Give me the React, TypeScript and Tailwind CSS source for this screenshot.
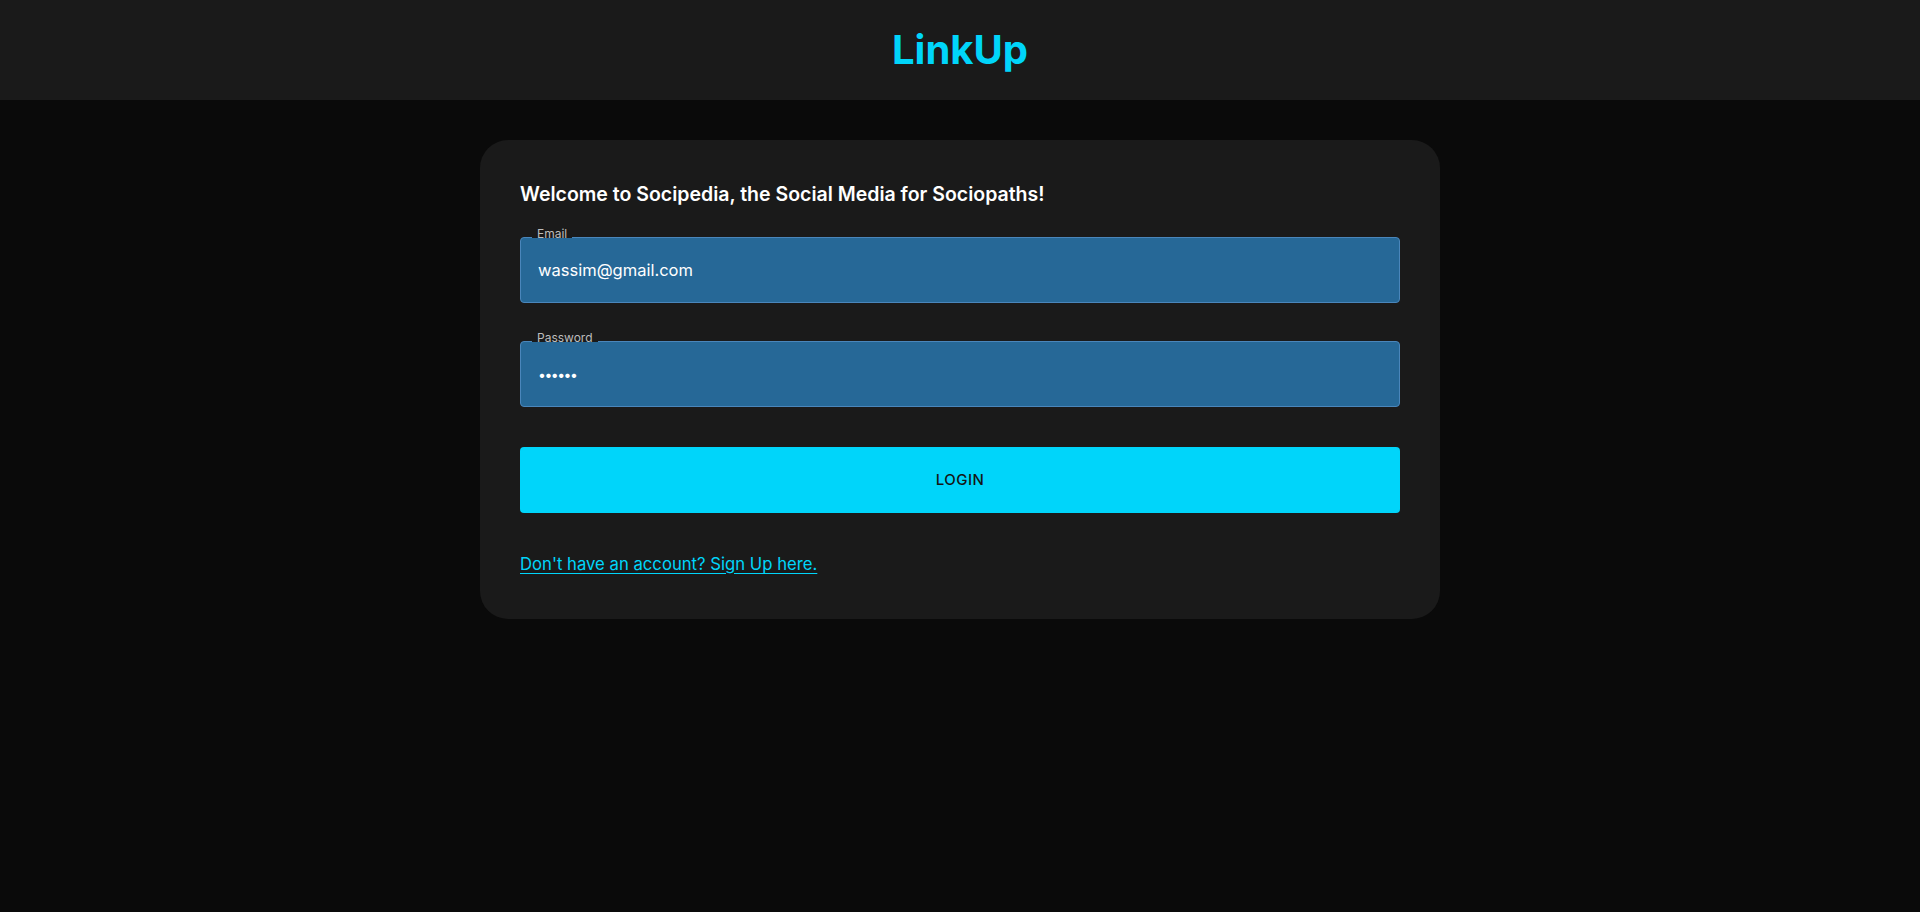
import React from "react";

function Field({ label, value, type }: { label: string; value: string; type: string }) {
  const isPw = type === "password";
  return (
    <div className="relative">
      <div className="h-[66px] rounded-[4px] border border-[#4a86bb] bg-[#266897] flex items-center pl-[17px] pr-4">
        <input
          type={type}
          defaultValue={value}
          readOnly
          className={
            isPw
              ? "w-full bg-transparent text-white text-[14px] tracking-[-1.5px] outline-none font-['Inter',sans-serif]"
              : "w-full bg-transparent text-white text-[16.5px] outline-none font-['Inter',sans-serif]"
          }
        />
      </div>
      <span className="absolute left-[12px] top-[-10px] px-[5px] h-[14px] leading-[14px] bg-[linear-gradient(to_bottom,#1a1a1a_0px,#1a1a1a_11px,transparent_11px)] text-[12px] text-[#bdbdbd] font-['Inter',sans-serif]">
        {label}
      </span>
    </div>
  );
}

export default function App() {
  return (
    <div className="min-h-screen w-full bg-[#0a0a0a] font-['Inter',sans-serif]">
      <header className="h-[100px] bg-[#1a1a1a] flex items-center justify-center">
        <h1 className="text-[40px] leading-none font-bold text-[#00d5fa]">LinkUp</h1>
      </header>
      <main className="flex justify-center pt-[40px]">
        <div className="w-[960px] rounded-[28px] bg-[#1a1a1a] p-10">
          <h2 className="pt-[2px] text-[19.5px] leading-[24px] font-semibold text-white">
            Welcome to Socipedia, the Social Media for Sociopaths!
          </h2>
          <div className="mt-[31px] flex flex-col gap-[38px]">
            <Field label="Email" value="wassim@gmail.com" type="text" />
            <Field label="Password" value="123456" type="password" />
          </div>
          <button className="mt-[40px] w-full h-[66px] rounded-[4px] bg-[#00d5fa] text-[#151515] text-[15px] font-medium tracking-[0.5px] uppercase">
            Login
          </button>
          <div className="mt-[38px] leading-[26px] pb-[2px]">
            <a href="#" className="text-[16.7px] text-[#00d5fa] underline underline-offset-[3px]">
              Don't have an account? Sign Up here.
            </a>
          </div>
        </div>
      </main>
    </div>
  );
}
